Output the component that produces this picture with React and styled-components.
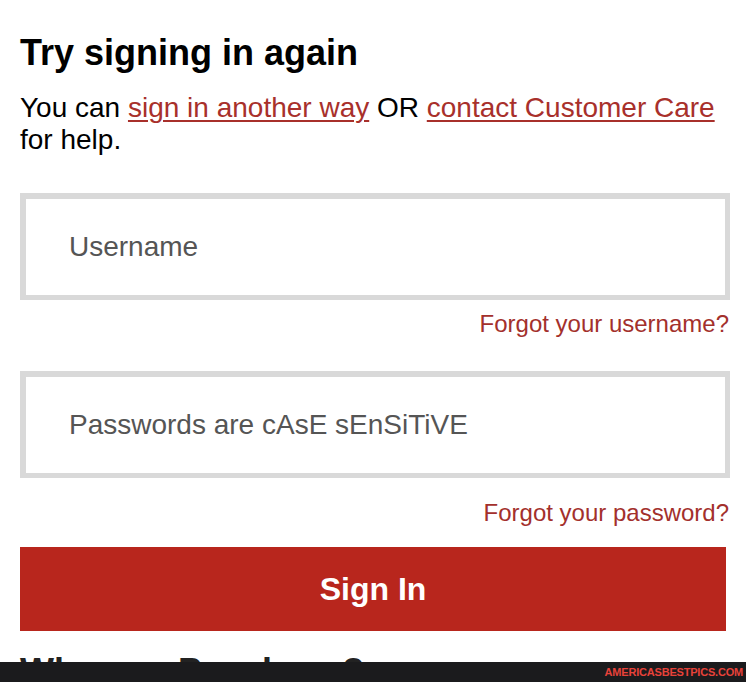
import React from "react";
import styled, { createGlobalStyle } from "styled-components";

const GlobalStyle = createGlobalStyle`
  html, body {
    margin: 0;
    padding: 0;
    background: #fff;
  }
  body {
    font-family: "Liberation Sans", Arial, Helvetica, sans-serif;
    color: #000;
    overflow: hidden;
  }
`;

const Page = styled.div`
  position: relative;
  width: 746px;
  height: 682px;
  overflow: hidden;
  padding: 33px 16px 0 20px;
  box-sizing: border-box;
`;

const Title = styled.h1`
  margin: 0;
  font-size: 36px;
  line-height: 40px;
  font-weight: 700;
`;

const Intro = styled.p`
  margin: 19px 0 0;
  font-size: 28px;
  line-height: 32px;
`;

const TextLink = styled.a`
  color: #a8302b;
  text-decoration: underline;
  text-decoration-thickness: 2px;
  text-underline-offset: 3px;
`;

const Field = styled.input`
  display: block;
  width: 100%;
  height: 107px;
  box-sizing: border-box;
  margin-top: ${(p) => p.$top}px;
  padding: 0 0 0 43px;
  border: 5px solid #d9d9d9;
  border-top-width: 6px;
  border-left-width: 6px;
  background: #fff;
  font-family: inherit;
  font-size: 28px;
  color: #333;
  outline: none;
  border-radius: 0;

  &::placeholder {
    color: #555;
  }
`;

const HelpRow = styled.div`
  display: flex;
  justify-content: flex-end;
  margin-top: ${(p) => p.$top}px;
  padding-right: 1px;
`;

const HelpLink = styled.a`
  color: #a3302c;
  font-size: 24px;
  line-height: 28px;
  text-decoration: none;
`;

const SignInButton = styled.button`
  display: block;
  width: 706px;
  height: 84px;
  margin-top: 20px;
  border: none;
  background: #b8261d;
  color: #fff;
  font-family: inherit;
  font-size: 32px;
  font-weight: 700;
  cursor: pointer;
`;

const NextHeading = styled.h2`
  margin: 21px 0 0;
  font-size: 36px;
  line-height: 40px;
  font-weight: 700;
  color: #222;
`;

const Watermark = styled.div`
  position: absolute;
  left: 0;
  right: 0;
  bottom: 0;
  height: 20px;
  background: #1b1b1d;
  display: flex;
  align-items: center;
  justify-content: flex-end;
  padding-right: 3px;
`;

const WatermarkText = styled.span`
  font-family: "Liberation Sans Narrow", "Liberation Sans", Arial, sans-serif;
  font-size: 11px;
  font-weight: 700;
  color: #e8423a;
  letter-spacing: -0.2px;
`;

export default function App() {
  return (
    <>
      <GlobalStyle />
      <Page>
        <Title>Try signing in again</Title>
        <Intro>
          You can <TextLink href="#">sign in another way</TextLink> OR{" "}
          <TextLink href="#">contact Customer Care</TextLink> for help.
        </Intro>
        <Field $top={37} placeholder="Username" />
        <HelpRow $top={10}>
          <HelpLink href="#">Forgot your username?</HelpLink>
        </HelpRow>
        <Field $top={33} type="password" placeholder="Passwords are cAsE sEnSiTiVE" />
        <HelpRow $top={21}>
          <HelpLink href="#">Forgot your password?</HelpLink>
        </HelpRow>
        <SignInButton>Sign In</SignInButton>
        <NextHeading>Why use Passkeys?</NextHeading>
        <Watermark>
          <WatermarkText>AMERICASBESTPICS.COM</WatermarkText>
        </Watermark>
      </Page>
    </>
  );
}
